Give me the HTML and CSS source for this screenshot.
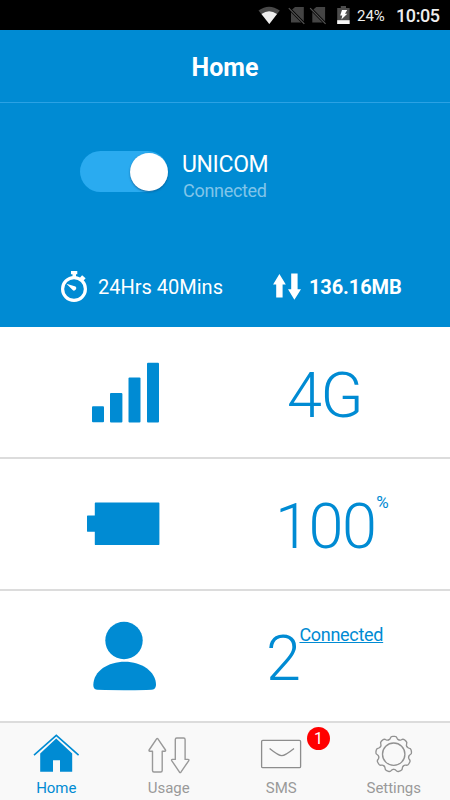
FILE: index.html
```html
<!DOCTYPE html>
<html lang="en">
<head>
<meta charset="utf-8">
<title>Home</title>
<link rel="stylesheet" href="styles.css">
</head>
<body>
<div class="app">
  <div class="status">
    <svg class="status-icons" viewBox="256 4 96 22" width="96" height="22">
      <path d="M258.5 10.5Q269 2.8 279.8 10.5L269.3 24Z" fill="#494949"/>
      <path d="M261.5 14Q269 8.6 277 14L269.3 24Z" fill="#eee"/>
      <g id="nosim"><path d="M295 7H303.8V22.6H291V10.6Z" fill="#444"/><path d="M288.8 8L304.5 24" stroke="#000" stroke-width="2.6"/><path d="M288.8 8.2L304.3 23.8" stroke="#555" stroke-width="1.2"/></g>
      <use href="#nosim" x="21.3"/>
      <path d="M340.8 6H346V8H349.6V24H337.2V8H340.8Z" fill="#4d4d4d"/>
      <path d="M337.2 20.2H349.6V24H337.2Z" fill="#f5f5f5"/>
      <path d="M342 10H347.2L345 13.7H347.3L341.4 19.6L342.3 15.5H340.2Z" fill="#fff"/>
    </svg>
    <span class="percent">24%</span>
    <span class="clock">10:05</span>
  </div>
  <header class="title">Home</header>
  <section class="hero">
    <div class="connection">
      <div class="toggle"><span class="knob"></span></div>
      <div class="network"><div class="name">UNICOM</div><div class="state">Connected</div></div>
    </div>
    <div class="stats">
      <svg viewBox="60 270 28 32" width="28" height="32">
        <circle cx="74" cy="289" r="11.4" fill="none" stroke="#fff" stroke-width="3.2"/>
        <path d="M71 271H77.3V274.2H76V278H72.5V274.2H71Z" fill="#fff"/>
        <path d="M81 276.5L84.5 279.5" stroke="#fff" stroke-width="3.4"/>
        <path d="M66.4 283.8L75.5 286.6A2.2 2.2 0 1 1 72.4 289.7Z" fill="#fff"/>
      </svg>
      <span class="time">24Hrs 40Mins</span>
      <svg class="arrows" viewBox="272 272 30 30" width="30" height="30">
        <path d="M279.4 275L285.8 285.4H282.6V298.4H276.2V285.4H273.1Z" fill="#fff"/>
        <path d="M294.4 300.8L301 290.3H297.6V274.5H291.2V290.3H288Z" fill="#fff"/>
      </svg>
      <span class="data">136.16MB</span>
    </div>
  </section>
  <main>
    <section class="row">
      <svg class="icon icon-signal" viewBox="84 358 80 70" width="80" height="70" fill="#008bd3">
        <rect x="92" y="406.2" width="12" height="16" rx="1"/><rect x="110" y="393" width="12.4" height="29.5" rx="1"/><rect x="128.5" y="377.6" width="12" height="45" rx="1"/><rect x="147" y="362.8" width="12" height="59.8" rx="1"/>
      </svg>
      <div class="value v-signal">4G</div>
    </section>
    <section class="row">
      <svg class="icon" viewBox="84 489 80 70" width="80" height="70" fill="#008bd3">
        <path d="M95.5 502.6H158.7Q159.4 502.6 159.4 503.3V544.3Q159.4 545 158.7 545H95.2Q94.8 545 94.8 544.3V531.7H87.4Q87 531.7 87 531V516.3Q87 515.6 87.7 515.6H94.8V503.3Q94.8 502.6 95.5 502.6Z"/>
      </svg>
      <div class="value v-battery">100<span class="unit">%</span></div>
    </section>
    <section class="row">
      <svg class="icon icon-clients" viewBox="84 620 80 76" width="80" height="76" fill="#008bd3">
        <circle cx="124" cy="640.5" r="18.7"/>
        <path d="M96 689.6Q93.4 688.7 93.3 685C93.6 671 108 661.8 124.8 661.8S156 671.5 156 685Q155.6 688.8 153 689.5Q148 690.2 124 690.2T96 689.6Z"/>
      </svg>
      <div class="value v-clients">2<span class="clients">Connected</span></div>
    </section>
  </main>
  <nav class="tabs">
    <a class="tab active">
      <svg viewBox="32 732 48 44" width="48" height="44">
        <path d="M40.2 753.6L56.2 738.6L72.2 753.6V771.8H60V760.2H53V771.8H40.2Z" fill="#008bd3"/>
        <path d="M34 755.2L56.3 735.4L78.6 755.2" fill="none" stroke="#008bd3" stroke-width="1.6"/>
      </svg>
      <span>Home</span>
    </a>
    <a class="tab">
      <svg viewBox="145 732 48 44" width="48" height="44" fill="none" stroke="#999" stroke-width="1.4" stroke-linejoin="round">
        <path d="M156.6 738.8Q157.2 738 157.9 738.8L165.5 750Q165.9 751.2 164.8 751.2H162.2V770.5Q162.2 772 160.7 772H154Q152.5 772 152.5 770.5V751.2H149.8Q148.7 751.2 149.1 750Z"/>
        <path d="M180.9 772.2Q180.2 773 179.5 772.2L171.7 760.6Q171.2 759.4 172.3 759.4H175.3V739.5Q175.3 738 176.8 738H183.6Q185.1 738 185.1 739.5V759.4H188.1Q189.2 759.4 188.8 760.6Z"/>
      </svg>
      <span>Usage</span>
    </a>
    <a class="tab">
      <svg viewBox="257 732 48 44" width="48" height="44" fill="none" stroke="#8d8d8d" stroke-width="1.3">
        <rect x="261.6" y="740.4" width="39" height="27.2" rx="1.2"/>
        <path d="M269.6 748.5Q278.5 755.7 281.8 755.7T294 748.5"/>
      </svg>
      <span>SMS</span>
      <b class="badge">1</b>
    </a>
    <a class="tab">
      <svg viewBox="370 732 48 44" width="48" height="44" fill="none" stroke="#929292" stroke-width="1.35" stroke-linecap="round">
        <g transform="translate(393.7 754.2)">
          <circle r="11.2"/>
          <path id="tooth" d="M-5.2-14.3Q-3.9-14.6-3.4-16Q-2.8-17.9-1-17.9H1Q2.8-17.9 3.4-16Q3.9-14.6 5.2-14.3"/>
          <use href="#tooth" transform="rotate(40)"/><use href="#tooth" transform="rotate(80)"/><use href="#tooth" transform="rotate(120)"/><use href="#tooth" transform="rotate(160)"/><use href="#tooth" transform="rotate(200)"/><use href="#tooth" transform="rotate(240)"/><use href="#tooth" transform="rotate(280)"/><use href="#tooth" transform="rotate(320)"/>
        </g>
      </svg>
      <span>Settings</span>
    </a>
  </nav>
</div>
</body>
</html>
```
FILE: styles.css
```css
* { box-sizing: border-box; }
body { margin: 0; font-family: Roboto, sans-serif; background: #fff; }
svg { display: block; flex: none; }
.app { width: 450px; height: 800px; display: flex; flex-direction: column; overflow: hidden; }
.status { height: 30px; background: #000; color: #eee; display: flex; align-items: center; padding-left: 256px; flex: none; }
.percent { font-size: 15px; width: 39px; margin-left: 5px; line-height: 30px; padding-top: 1px; }
.clock { font-size: 18px; letter-spacing: -.4px; font-weight: 500; line-height: 30px; padding-top: 2px; }
.title { height: 73px; flex: none; background: #008bd3; border-bottom: 1px solid #2ba2e4; color: #fff; font-size: 25px; font-weight: 700; line-height: 76px; text-align: center; }
.hero { height: 224px; flex: none; background: #008bd3; color: #fff; padding-top: 48px; }
.connection { display: flex; padding-left: 80px; height: 119px; }
.toggle { width: 88px; height: 41px; border-radius: 21px; background: #2aabf0; display: flex; justify-content: flex-end; align-items: center; }
.knob { width: 38px; height: 38px; border-radius: 50%; background: #fff; box-shadow: 0 1px 2px rgba(0,60,110,.6); }
.network { padding: 1px 0 0 14px; }
.name { font-size: 23px; letter-spacing: -.35px; line-height: 26px; }
.state { font-size: 18px; letter-spacing: -.3px; line-height: 24px; margin: 1px 0 0 1px; color: #80c5e9; }
.stats { display: flex; height: 32px; padding-left: 60px; align-items: center; font-size: 20px; line-height: 32px; }
.time { width: 165px; padding: 2px 0 0 10px; }
.arrows { margin-left: 19px; }
.data { letter-spacing: -.1px; font-weight: 700; padding: 2px 0 0 7px; }
.row { height: 132px; display: flex; align-items: center; padding-left: 84px; color: #008bd3; border-bottom: 2px solid #dcdcdc; }
.icon-signal { margin-top: 2px; }
.icon-clients { margin-top: 4px; }
.value { font-size: 63px; font-weight: 300; line-height: 74px; display: flex; align-items: flex-start; margin-top: 6px; letter-spacing: -1.5px; }
.v-signal { margin: 8px 0 0 123px; }
.v-battery { margin-left: 111px; }
.v-clients { margin-left: 102px; }
.unit { font-size: 17px; font-weight: 400; line-height: 20px; letter-spacing: 0; margin: 2px 0 0 1px; }
.clients { font-size: 18px; font-weight: 400; line-height: 22px; letter-spacing: -.3px; margin: 2px 0 0; text-decoration: underline; }
.tabs { height: 77px; flex: none; display: grid; grid-template-columns: repeat(4, 1fr); background: #f9f9f9; }
.tab { position: relative; display: flex; flex-direction: column; align-items: center; padding-top: 9px; color: #999; font-size: 15px; letter-spacing: -.05px; line-height: 24px; }
.active { color: #008bd3; }
.badge { position: absolute; left: 82px; top: 4px; width: 23px; height: 23px; border-radius: 50%; background: #f00; color: #fff; font-size: 16px; font-weight: 400; line-height: 23px; text-align: center; }
```
